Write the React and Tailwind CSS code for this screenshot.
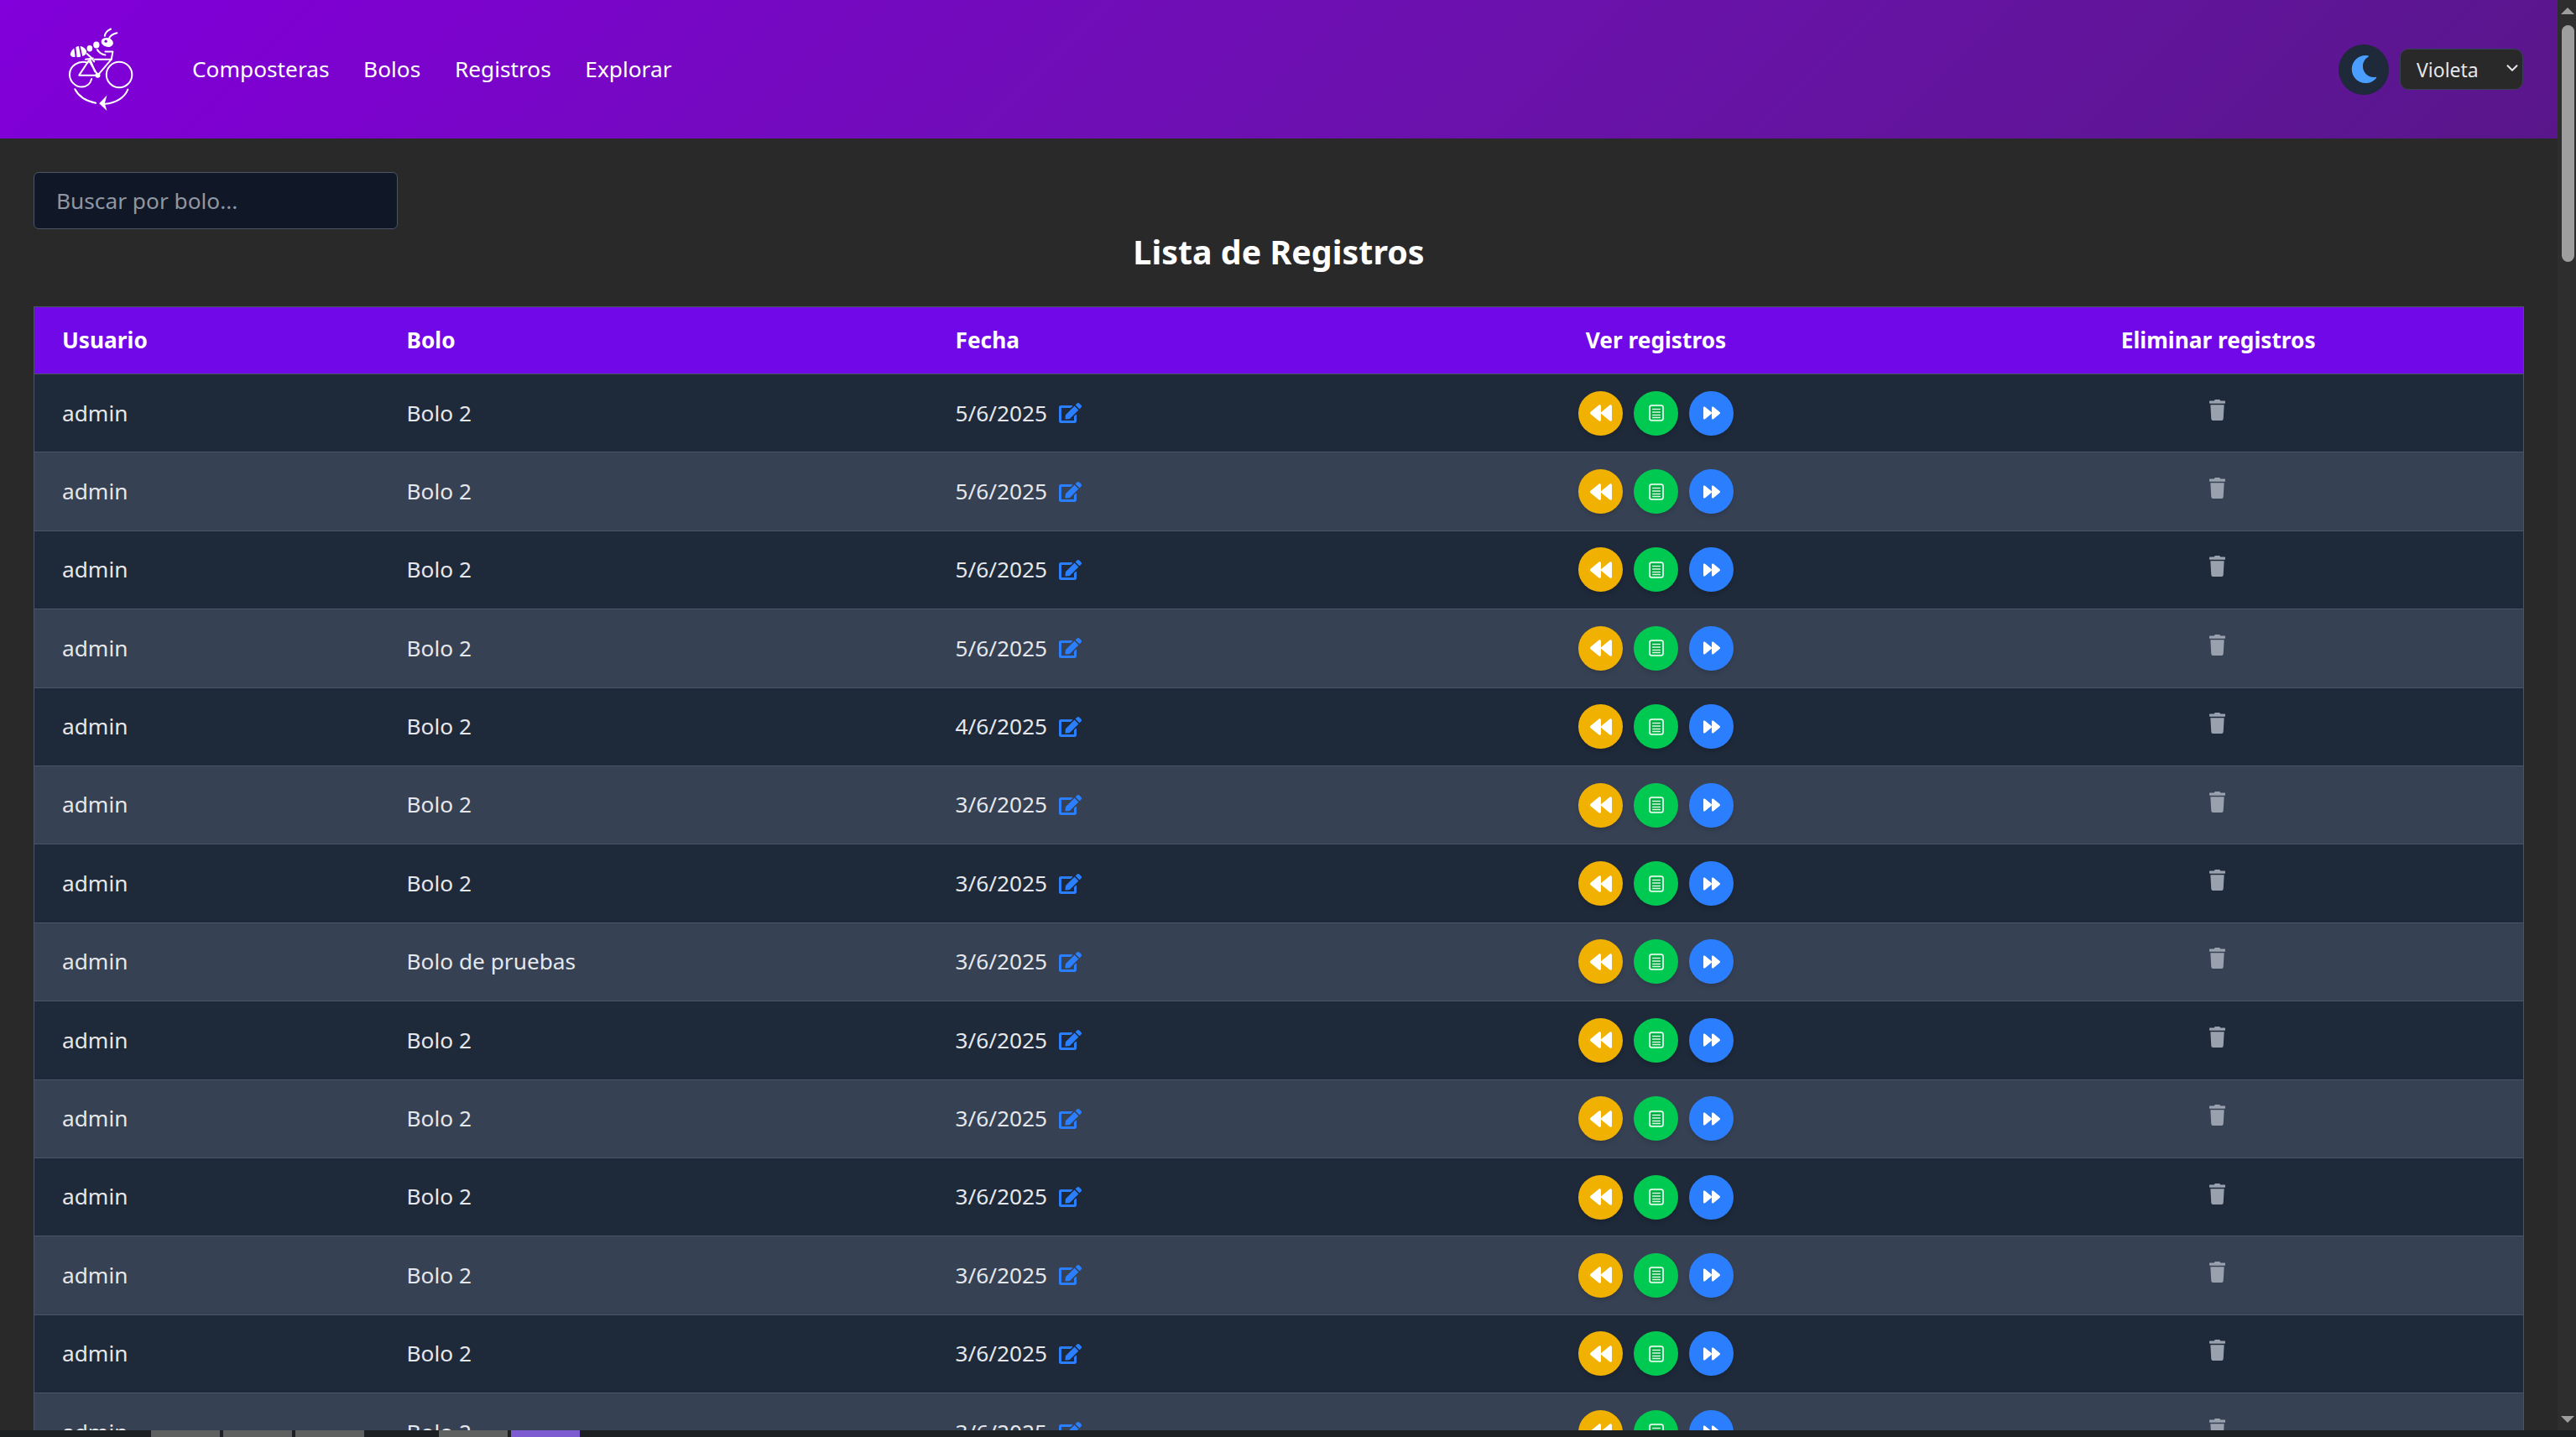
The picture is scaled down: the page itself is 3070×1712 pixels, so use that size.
import { FaBackward, FaForward, FaEdit, FaTrash, FaMoon } from 'react-icons/fa';
import { ChevronDown } from 'lucide-react';

const fechas = ['5/6/2025', '5/6/2025', '5/6/2025', '5/6/2025', '4/6/2025', '3/6/2025', '3/6/2025', '3/6/2025', '3/6/2025', '3/6/2025', '3/6/2025', '3/6/2025', '3/6/2025', '3/6/2025'];
const registros = fechas.map((fecha, i) => ({ fecha, bolo: i === 7 ? 'Bolo de pruebas' : 'Bolo 2' }));
const navLinks = ['Composteras', 'Bolos', 'Registros', 'Explorar'];
const tabs = ['bg-[#5f6161]', 'bg-[#5f6161]', 'bg-[#5f6161]'];

const Logo = () => (
  <svg viewBox="95 75 235 300" className="w-[78px] h-[100px]" fill="none" stroke="white" strokeWidth="6" strokeLinecap="round" strokeLinejoin="round">
    {/* antennae */}
    <path d="M224 104 C226 92 234 84 246 79" />
    <path d="M240 112 C245 101 255 96 268 93" />
    {/* ant body */}
    <ellipse cx="233" cy="127" rx="22" ry="16" fill="white" stroke="none" transform="rotate(15 233 127)" />
    <circle cx="228" cy="123" r="5" fill="#7d00d0" stroke="none" />
    <ellipse cx="194" cy="136" rx="11" ry="12" fill="white" stroke="none" />
    <ellipse cx="170" cy="149" rx="10" ry="11" fill="white" stroke="none" />
    <path d="M100 171 C102 160 108 152 114 148 L118 178 C111 182 104 180 100 171 Z" fill="white" stroke="none" />
    <path d="M120 145 C124 142 128 141 131 141 L138 178 C133 180 128 181 124 180 Z" fill="white" stroke="none" />
    <path d="M136 141 C146 142 156 150 159 160 C159 168 152 174 144 177 Z" fill="white" stroke="none" />
    {/* rider */}
    <path d="M197 153 C204 164 214 170 226 172" />
    <path d="M160 168 L176 182 L186 196" />
    {/* bike */}
    <path d="M163 200 C130 190 98 212 98 242 C98 268 120 287 142 287 C158 287 172 276 177 258" />
    <circle cx="276" cy="243" r="46" />
    <path d="M132 245 L167 192 L199 245 Z" />
    <path d="M172 190 L189 232" />
    <path d="M155 188 L182 184" />
    <path d="M199 245 L248 188 L188 188" />
    <path d="M248 188 L253 160 L226 160" />
    <circle cx="199" cy="245" r="9" fill="white" stroke="none" />
    {/* arrow */}
    <path d="M117 295 C130 320 158 338 192 345" />
    <path d="M307 296 C295 325 265 345 225 348" />
    <path d="M204 346 L232 317 L224 346 L232 373 Z" fill="white" stroke="none" />
  </svg>
);

const DocIcon = () => (
  <svg viewBox="0 0 18 20" className="w-[18px] h-[20px]" fill="none">
    <rect x="1" y="1" width="16" height="18" rx="2.5" stroke="white" strokeWidth="1.6" />
    <rect x="3" y="3" width="12" height="14" fill="#00a63e" />
    <path d="M4 5.5H14M4 9H14M4 12.5H14M4 15.5H14" stroke="#d8f8e4" strokeWidth="1.4" />
  </svg>
);

const CircleButton = ({ color, children }) => (
  <button className={`w-[53px] h-[53px] rounded-full flex items-center justify-center text-white shadow-md ${color}`}>{children}</button>
);

const App = () => (
  <div className="w-[3070px] h-[1712px] overflow-hidden bg-[#1c2022] font-['Noto_Sans',sans-serif]">
    <div className="flex h-[1704px]">
      <div className="flex-1 min-w-0 bg-[#292929] overflow-hidden">
        <header className="h-[165px] flex items-center justify-between bg-linear-135 from-purple-700 to-purple-900 text-white pl-[82px] pr-[41px]">
          <div className="flex items-center">
            <Logo />
            <nav className="flex items-center gap-[40.6px] ml-[69px] text-[26.25px]">
              {navLinks.map((link) => <a key={link}>{link}</a>)}
            </nav>
          </div>
          <div className="flex items-center gap-[13px]">
            <button className="w-[60px] h-[60px] rounded-full bg-gray-800 flex items-center justify-center">
              <FaMoon className="w-[33px] h-[33px] text-[#4a9eff]" />
            </button>
            <div className="relative">
              <select className="appearance-none w-[147px] h-[49px] rounded-[10px] bg-[#292929] border border-gray-700 text-gray-200 text-[23px] pl-[19px] pt-[2px]">
                <option>Violeta</option>
              </select>
              <ChevronDown className="absolute right-[2px] top-[12px] w-[22px] h-[22px] text-gray-200 pointer-events-none" strokeWidth={2.2} />
            </div>
          </div>
        </header>

        <main className="px-[40px] pt-[40px]">
          <input placeholder="Buscar por bolo..." className="block w-[434px] h-[68px] px-[26px] pb-[1px] rounded-md bg-gray-900 border border-gray-600 text-[26.25px] text-white placeholder:text-[#8f96a3]" />
          <h2 className="mt-[2px] mb-[40px] h-[50px] text-center text-[39.4px] leading-[50px] font-bold text-white">Lista de Registros</h2>
          <table className="w-[2968px] table-fixed border-collapse border border-gray-600 text-[26.25px] text-gray-200">
            <thead>
              <tr className="h-[80px] bg-violet-700 text-white font-bold">
                <th className="w-[411px] pl-[33px] text-left">Usuario</th>
                <th className="w-[654px] pl-[33px] text-left">Bolo</th>
                <th className="w-[561px] pl-[33px] text-left">Fecha</th>
                <th className="w-[614px] text-center">Ver registros</th>
                <th className="text-center">Eliminar registros</th>
              </tr>
            </thead>
            <tbody>
              {registros.map((r, i) => (
                <tr key={i} className={`h-[93.4px] border-t border-gray-600 ${i % 2 === 0 ? 'bg-gray-800' : 'bg-gray-700'}`}>
                  <td className="pl-[33px]">admin</td>
                  <td className="pl-[33px]">{r.bolo}</td>
                  <td className="pl-[33px]">
                    <span className="inline-flex items-center gap-[14px]">
                      {r.fecha}
                      <FaEdit className="w-[27px] h-[24px] text-blue-500" />
                    </span>
                  </td>
                  <td>
                    <div className="flex justify-center gap-[13px]">
                      <CircleButton color="bg-yellow-500"><FaBackward className="w-[26px] h-[26px]" /></CircleButton>
                      <CircleButton color="bg-green-500"><DocIcon /></CircleButton>
                      <CircleButton color="bg-blue-500"><FaForward className="w-[20px] h-[20px]" /></CircleButton>
                    </div>
                  </td>
                  <td>
                    <FaTrash preserveAspectRatio="none" className="mx-auto mb-[8px] -translate-x-px w-[19px] h-[25px] text-gray-400" />
                  </td>
                </tr>
              ))}
            </tbody>
          </table>
        </main>
      </div>

      {/* scrollbar */}
      <div className="w-[22px] bg-[#2e2e2e] flex flex-col items-center pl-[2px]">
        <div className="mt-[9px] w-0 h-0 border-x-[8px] border-x-transparent border-b-[8px] border-b-[#9e9e9e]" />
        <div className="mt-[13px] w-[15px] h-[282px] rounded-full bg-[#9e9e9e]" />
        <div className="mt-auto mb-[9px] w-0 h-0 border-x-[8px] border-x-transparent border-t-[8px] border-t-[#9e9e9e]" />
      </div>
    </div>

    {/* window strip */}
    <div className="h-[8px] flex pl-[180px] gap-[4px]">
      {tabs.map((bg, i) => <div key={i} className={`w-[82px] ${bg}`} />)}
      <div className="w-[82px] ml-[85px] bg-[#5f6161]" />
      <div className="w-[82px] bg-[#7c5cd0]" />
    </div>
  </div>
);

export default App;
